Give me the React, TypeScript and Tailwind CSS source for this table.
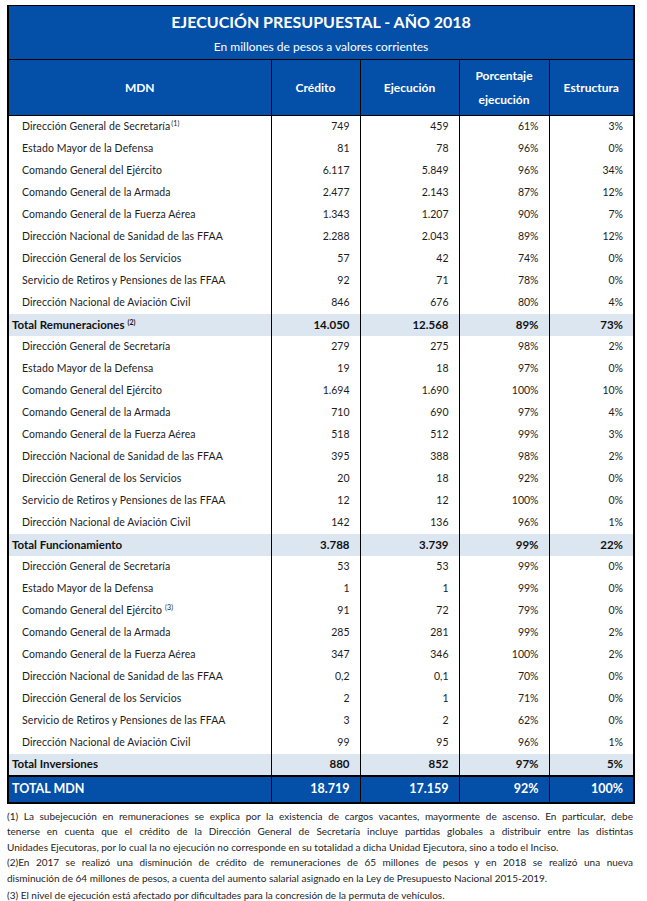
import React from 'react';

type Row = { name: string; note?: string; credito: string; ejecucion: string; pct: string; est: string };

type Group = { total: Row; rows: Row[] };

const UNITS = [
  'Dirección General de Secretaría',
  'Estado Mayor de la Defensa',
  'Comando General del Ejército',
  'Comando General de la Armada',
  'Comando General de la Fuerza Aérea',
  'Dirección Nacional de Sanidad de las FFAA',
  'Dirección General de los Servicios',
  'Servicio de Retiros y Pensiones de las FFAA',
  'Dirección Nacional de Aviación Civil',
];

function build(values: string[][], notes: Record<number, string> = {}): Row[] {
  return values.map((v, i) => ({
    name: UNITS[i],
    note: notes[i],
    credito: v[0],
    ejecucion: v[1],
    pct: v[2],
    est: v[3],
  }));
}

const GROUPS: Group[] = [
  {
    rows: build(
      [
        ['749', '459', '61%', '3%'],
        ['81', '78', '96%', '0%'],
        ['6.117', '5.849', '96%', '34%'],
        ['2.477', '2.143', '87%', '12%'],
        ['1.343', '1.207', '90%', '7%'],
        ['2.288', '2.043', '89%', '12%'],
        ['57', '42', '74%', '0%'],
        ['92', '71', '78%', '0%'],
        ['846', '676', '80%', '4%'],
      ],
      { 0: '(1)' }
    ),
    total: { name: 'Total Remuneraciones', note: '(2)', credito: '14.050', ejecucion: '12.568', pct: '89%', est: '73%' },
  },
  {
    rows: build([
      ['279', '275', '98%', '2%'],
      ['19', '18', '97%', '0%'],
      ['1.694', '1.690', '100%', '10%'],
      ['710', '690', '97%', '4%'],
      ['518', '512', '99%', '3%'],
      ['395', '388', '98%', '2%'],
      ['20', '18', '92%', '0%'],
      ['12', '12', '100%', '0%'],
      ['142', '136', '96%', '1%'],
    ]),
    total: { name: 'Total Funcionamiento', credito: '3.788', ejecucion: '3.739', pct: '99%', est: '22%' },
  },
  {
    rows: build(
      [
        ['53', '53', '99%', '0%'],
        ['1', '1', '99%', '0%'],
        ['91', '72', '79%', '0%'],
        ['285', '281', '99%', '2%'],
        ['347', '346', '100%', '2%'],
        ['0,2', '0,1', '70%', '0%'],
        ['2', '1', '71%', '0%'],
        ['3', '2', '62%', '0%'],
        ['99', '95', '96%', '1%'],
      ],
      { 2: '(3)' }
    ),
    total: { name: 'Total Inversiones', credito: '880', ejecucion: '852', pct: '97%', est: '5%' },
  },
];

function Note({ n, space }: { n: string; space?: boolean }) {
  return (
    <span className={`relative -top-[4px] text-[7px] ${space ? 'ml-[3px]' : 'ml-[1px]'}`}>{n}</span>
  );
}

function DataRow({ row }: { row: Row }) {
  return (
    <tr className="h-[22px] text-[10.5px] text-[#1c1c1c]">
      <td className="border-r border-black pl-[13px] tracking-[0.1px]">
        {row.name}
        {row.note && <Note n={row.note} space={row.note === '(3)'} />}
      </td>
      <td className="border-r border-black pr-[10px] text-right">{row.credito}</td>
      <td className="border-r border-black pr-[10px] text-right">{row.ejecucion}</td>
      <td className="border-r border-black pr-[10px] text-right">{row.pct}</td>
      <td className="pr-[10px] text-right">{row.est}</td>
    </tr>
  );
}

function TotalRow({ row }: { row: Row }) {
  return (
    <tr className="h-[22px] bg-[#dce6f0] text-[11.5px] font-bold text-[#111]">
      <td className="border-r border-black pl-[3px]">
        {row.name}
        {row.note && <Note n={row.note} space />}
      </td>
      <td className="border-r border-black pr-[10px] text-right">{row.credito}</td>
      <td className="border-r border-black pr-[10px] text-right">{row.ejecucion}</td>
      <td className="border-r border-black pr-[10px] text-right">{row.pct}</td>
      <td className="pr-[10px] text-right">{row.est}</td>
    </tr>
  );
}

const NOTES: { text: string; justify: boolean; gap?: boolean }[] = [
  { text: '(1) La subejecución en remuneraciones se explica por la existencia de cargos vacantes, mayormente de ascenso. En particular, debe', justify: true },
  { text: 'tenerse en cuenta que el crédito de la Dirección General de Secretaría incluye partidas globales a distribuir entre las distintas', justify: true },
  { text: 'Unidades Ejecutoras, por lo cual la no ejecución no corresponde en su totalidad a dicha Unidad Ejecutora, sino a todo el Inciso.', justify: false },
  { text: '(2)En 2017 se realizó una disminución de crédito de remuneraciones de 65 millones de pesos y en 2018 se realizó una nueva', justify: true },
  { text: 'disminución de 64 millones de pesos, a cuenta del aumento salarial asignado en la Ley de Presupuesto Nacional 2015-2019.', justify: false },
  { text: '(3) El nivel de ejecución está afectado por dificultades para la concresión de la permuta de vehículos.', justify: false, gap: true },
];

export default function App() {
  return (
    <div className="min-h-[901px] w-[647px] bg-white pt-[5px] font-['Lato',sans-serif]">
      <div className="ml-[7px] w-[626px]">
        <table className="w-full table-fixed border-collapse border-x-2 border-t border-b-2 border-black">
          <colgroup>
            <col className="w-[263px]" />
            <col className="w-[89px]" />
            <col className="w-[99px]" />
            <col className="w-[90px]" />
            <col className="w-[85px]" />
          </colgroup>
          <thead className="bg-[#0450a8] text-white">
            <tr>
              <th colSpan={5} className="h-[54px] border-b border-black p-0 font-normal">
                <div className="flex h-full flex-col items-center">
                  <div className="mt-[5px] text-[16px] font-bold leading-[22px]">EJECUCIÓN PRESUPUESTAL - AÑO 2018</div>
                  <div className="mt-[6px] text-[12px] leading-[16px]">En millones de pesos a valores corrientes</div>
                </div>
              </th>
            </tr>
            <tr className="h-[56px] text-[12px] font-bold">
              <th className="border-r border-b border-black">MDN</th>
              <th className="border-r border-b border-black">Crédito</th>
              <th className="border-r border-b border-black">Ejecución</th>
              <th className="border-r border-b border-black leading-[24px]">
                Porcentaje
                <br />
                ejecución
              </th>
              <th className="border-b border-black">Estructura</th>
            </tr>
          </thead>
          <tbody>
            {GROUPS.map((g) => (
              <React.Fragment key={g.total.name}>
                {g.rows.map((r) => (
                  <DataRow key={r.name} row={r} />
                ))}
                <TotalRow row={g.total} />
              </React.Fragment>
            ))}
            <tr className="h-[27px] border-t-2 border-black bg-[#0450a8] text-[12.5px] font-bold text-white">
              <td className="border-r border-black pl-[3px]">TOTAL MDN</td>
              <td className="border-r border-black pr-[10px] text-right">18.719</td>
              <td className="border-r border-black pr-[10px] text-right">17.159</td>
              <td className="border-r border-black pr-[10px] text-right">92%</td>
              <td className="pr-[10px] text-right">100%</td>
            </tr>
          </tbody>
        </table>

        <div className="mt-[5px] text-[10px] leading-[15.5px] text-[#1e1e1e]">
          {NOTES.map((n) => (
            <div
              key={n.text}
              className={`whitespace-nowrap ${n.justify ? 'text-justify [text-align-last:justify]' : ''} ${n.gap ? 'mt-[2px]' : ''}`}
            >
              {n.text}
            </div>
          ))}
        </div>
      </div>
    </div>
  );
}
